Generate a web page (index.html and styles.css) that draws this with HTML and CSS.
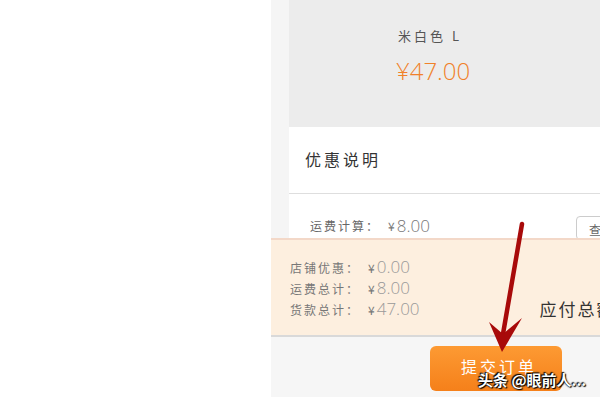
FILE: index.html
```html
<!DOCTYPE html>
<html lang="zh-CN">
<head>
  <meta charset="UTF-8">
  <title>确认订单</title>
  <link rel="stylesheet" href="styles.css">
</head>
<body>
  <div class="page">
    <div class="blank"></div>

    <div class="panel">
      <div class="content">
        <div class="product">
          <div class="sku">米白色 L</div>
          <div class="price">¥47.00</div>
        </div>
        <div class="promo">优惠说明</div>
        <div class="shipping">
          <span class="label">运费计算：</span><span class="yen">¥</span><span class="num">8.00</span>
          <span class="more">查看</span>
        </div>
      </div>

      <div class="summary">
        <div class="lines">
          <div><span class="label">店铺优惠：</span><span class="yen">¥</span><span class="num">0.00</span></div>
          <div><span class="label">运费总计：</span><span class="yen">¥</span><span class="num">8.00</span></div>
          <div><span class="label">货款总计：</span><span class="yen">¥</span><span class="num">47.00</span></div>
        </div>
        <div class="total">应付总额</div>
      </div>

      <div class="footer">
        <button class="submit">提交订单</button>
      </div>
    </div>
  </div>

  <!-- annotation arrow drawn over the screenshot -->
  <svg class="arrow" width="600" height="400" viewBox="0 0 600 400">
    <line x1="522" y1="224" x2="503" y2="334" stroke="#a80a0a" stroke-width="4.5" stroke-linecap="round"/>
    <polygon points="502,352 489,322 503,334 522,318" fill="#a80a0a"/>
  </svg>

  <div class="watermark">头条 @眼前人...</div>
</body>
</html>
```

FILE: styles.css
```css
/* Common styles */
body {
  margin: 0;
  background: #fff;
  font-family: "Noto Sans CJK SC", "Noto Sans", sans-serif;
  overflow: hidden;
}

.page {
  display: flex;
  width: 600px;
  height: 400px;
}

.blank {
  width: 271px;
}

/* Right phone panel */
.panel {
  flex: 1;
  display: flex;
  flex-direction: column;
  background: #f5f5f5;
  overflow: hidden;
}

.content {
  padding-left: 18px;
  height: 238px;
}

.product {
  height: 127px;
  background: #ececec;
  padding-left: 109px;
  box-sizing: border-box;
  padding-top: 25px;
}

.sku {
  font-size: 13px;
  color: #555;
  letter-spacing: 3px;
  line-height: 22px;
}

.price {
  margin-top: 9px;
  margin-left: -2px;
  font-size: 24px;
  line-height: 30px;
  font-weight: 300;
  color: #f0812a;
  font-family: "Open Sans", "Noto Sans", sans-serif;
}

.promo {
  height: 67px;
  background: #fff;
  border-bottom: 1px solid #dedede;
  box-sizing: border-box;
  display: flex;
  align-items: center;
  padding: 0 0 2px 16px;
  font-size: 16px;
  letter-spacing: 3px;
  color: #333;
}

.shipping {
  height: 44px;
  background: #fff;
  display: flex;
  align-items: flex-end;
  padding: 0 0 2px 21px;
  box-sizing: border-box;
  white-space: nowrap;
}

.label {
  font-size: 12px;
  letter-spacing: 2px;
  color: #666;
  line-height: 20px;
}

.yen {
  margin-left: 8px;
  font-size: 12px;
  color: #777;
  line-height: 20px;
}

.num {
  margin-left: 2px;
  font-family: "Open Sans", "Noto Sans", sans-serif;
  font-weight: 300;
  font-size: 17px;
  color: #777;
  line-height: 20px;
}

.more {
  margin-left: auto;
  margin-right: -18px;
  margin-bottom: -4px;
  width: 42px;
  height: 24px;
  border: 1px solid #ccc;
  border-radius: 4px;
  font-size: 12px;
  color: #666;
  padding: 4px 0 0 12px;
  box-sizing: border-box;
}

/* Totals */
.summary {
  height: 99px;
  background: #fdefdf;
  border-top: 2px solid #f3d8c8;
  border-bottom: 2px solid #d9d9d9;
  box-sizing: border-box;
  display: flex;
  align-items: flex-start;
  padding: 16px 0 0 20px;
  margin-left: -1px;
}

.lines {
  white-space: nowrap;
}

.lines div {
  height: 21px;
  line-height: 21px;
}

.lines .label,
.lines .yen {
  color: #777;
}

.lines .num {
  color: #999;
}

.total {
  margin-left: 120px;
  margin-top: 40px;
  font-size: 17px;
  letter-spacing: 2px;
  color: #333;
  white-space: nowrap;
}

/* Bottom bar */
.footer {
  flex: 1;
  padding: 9px 0 0 159px;
  background: #f6f6f6;
  border-bottom: 3px solid #fff;
}

.submit {
  width: 132px;
  height: 45px;
  border: none;
  border-radius: 6px;
  background: linear-gradient(#fd9a33, #f5801a);
  color: #fff;
  font-family: "Noto Sans CJK SC", sans-serif;
  font-size: 16px;
  letter-spacing: 3px;
  padding: 0 0 6px 6px;
}

/* Overlays */
.arrow {
  position: absolute;
  left: 0;
  top: 0;
}

.watermark {
  position: absolute;
  left: 478px;
  top: 369px;
  font-size: 15px;
  font-weight: bold;
  color: #fff;
  text-shadow: 0 0 2px #000, 1px 1px 1px #000, -1px -1px 1px #000;
  white-space: nowrap;
}
```
